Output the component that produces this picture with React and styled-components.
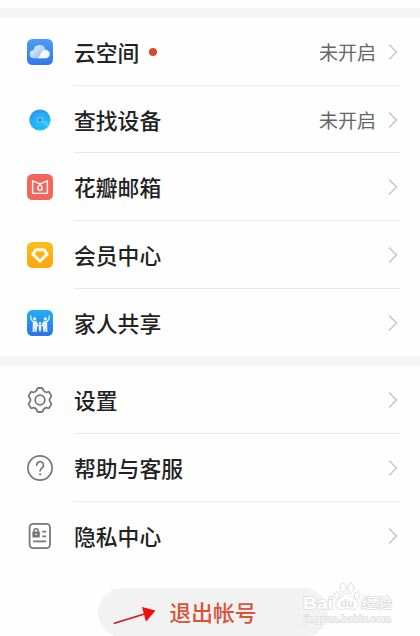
import React from "react";
import styled, { createGlobalStyle } from "styled-components";

const CloudIcon = () => (
  <svg width="26" height="26" viewBox="0 0 26 26">
    <defs>
      <linearGradient id="cloudBg" x1="0" y1="0" x2="0" y2="1">
        <stop offset="0" stopColor="#4a9df6" />
        <stop offset="1" stopColor="#3377ea" />
      </linearGradient>
      <linearGradient id="cloudShade" x1="0" y1="0" x2="1" y2="0.6">
        <stop offset="0" stopColor="#fff" stopOpacity="0.95" />
        <stop offset="1" stopColor="#fff" stopOpacity="0.35" />
      </linearGradient>
    </defs>
    <rect width="26" height="26" rx="5.5" fill="url(#cloudBg)" />
    <path
      d="M7 19.2a4 4 0 0 1-.5-8 6.3 6.3 0 0 1 12.3-.4 4.2 4.2 0 0 1 .2 8.4Z"
      fill="url(#cloudShade)"
    />
    <path
      d="M9 19.2c3.3 0 3.5-2.2 4.7-4.8 1.2-2.5 3-3.6 5.1-3.5a4.2 4.2 0 0 1 .2 8.3Z"
      fill="#fff"
      fillOpacity="0.9"
    />
  </svg>
);

const FindIcon = () => (
  <svg width="26" height="26" viewBox="0 0 26 26">
    <defs>
      <linearGradient id="findBg" x1="0" y1="0.1" x2="0.3" y2="1">
        <stop offset="0" stopColor="#3394ee" />
        <stop offset="1" stopColor="#12c3fa" />
      </linearGradient>
    </defs>
    <circle cx="13" cy="13" r="10.6" fill="url(#findBg)" />
    <circle cx="13" cy="13" r="7" fill="#35b4f7" fillOpacity="0.5" />
    <circle cx="13" cy="13" r="3.6" fill="#5cc6f9" fillOpacity="0.6" />
    <path d="M13 13 23.4 15.3A10.6 10.6 0 0 1 20 20.9Z" fill="#5ccdfc" fillOpacity="0.7" />
    <circle cx="13" cy="13" r="1.3" fill="#1776cc" />
  </svg>
);

const MailIcon = () => (
  <svg width="26" height="26" viewBox="0 0 26 26">
    <rect width="26" height="26" rx="5.5" fill="#f4665c" />
    <g fill="none" stroke="#fff" strokeWidth="1.4" strokeLinejoin="round">
      <path d="M13 9.8 5.6 6.9V19.4H20.4V6.9Z" />
      <path d="M13 10.2c-1.1 1.4-2.2 2.5-2.2 3.9a2.2 2.2 0 0 0 4.4 0c0-1.4-1.1-2.5-2.2-3.9Z" />
    </g>
  </svg>
);

const MemberIcon = () => (
  <svg width="26" height="26" viewBox="0 0 26 26">
    <defs>
      <linearGradient id="memberBg" x1="0" y1="0" x2="0" y2="1">
        <stop offset="0" stopColor="#fdbd1d" />
        <stop offset="1" stopColor="#fba70e" />
      </linearGradient>
    </defs>
    <rect width="26" height="26" rx="5.5" fill="url(#memberBg)" />
    <path
      d="M9.1 7.7h7.8l3.3 4.5-7.2 7-7.2-7Z"
      fill="none"
      stroke="#fffdf0"
      strokeWidth="3"
      strokeLinejoin="round"
    />
  </svg>
);

const FamilyIcon = () => (
  <svg width="26" height="26" viewBox="0 0 26 26">
    <defs>
      <linearGradient id="familyBg" x1="0" y1="0" x2="0" y2="1">
        <stop offset="0" stopColor="#22aef3" />
        <stop offset="1" stopColor="#2b72ed" />
      </linearGradient>
    </defs>
    <rect width="26" height="26" rx="5.5" fill="url(#familyBg)" />
    <g fill="#fff" fillOpacity="0.9">
      <circle cx="7.6" cy="8.9" r="1.7" />
      <circle cx="18.4" cy="8.9" r="1.7" />
      <circle cx="13" cy="13.2" r="1.2" />
      <path d="M5.9 11.3h3.6l.9 4.5-.9 6.2H8.1l-.4-4.3-.4 4.3H5.6Z" />
      <path d="M16.5 11.3h3.6l.3 10.7h-1.7l-.4-4.3-.4 4.3h-1.4l-.9-6.2Z" />
      <path d="M12 14.8h2l.3 3-.5 3.7h-1.6l-.5-3.7Z" />
    </g>
    <g fill="none" stroke="#fff" strokeWidth="1.1" strokeLinecap="round" strokeLinejoin="round">
      <path d="M6.3 12 4.2 9.5 3.7 5.8M19.7 12l2.1-2.5.5-3.7" />
      <path d="m9.2 12 1.6 3.5 2.2.2 2.2-.2 1.6-3.5" />
    </g>
  </svg>
);

const SettingsIcon = () => (
  <svg width="26" height="26" viewBox="-13 -13 26 26">
    <g fill="none" stroke="#777" strokeWidth="1.8" strokeLinejoin="round">
      <path d="M-1.6-12H1.6Q2.7-12 3-10.7L3.2-9.8Q4.8-7.7 6.9-7.7L7.8-8Q9-8.4 9.6-7.4L11.2-4.6Q11.7-3.7 10.8-2.8L10.1-2.1Q8.7 0 10.1 2.1L10.8 2.8Q11.7 3.7 11.2 4.6L9.6 7.4Q9 8.4 7.8 8L6.9 7.7Q4.8 7.7 3.2 9.8L3 10.7Q2.7 12 1.6 12H-1.6Q-2.7 12-3 10.7L-3.2 9.8Q-4.8 7.7-6.9 7.7L-7.8 8Q-9 8.4-9.6 7.4L-11.2 4.6Q-11.7 3.7-10.8 2.8L-10.1 2.1Q-8.7 0-10.1-2.1L-10.8-2.8Q-11.7-3.7-11.2-4.6L-9.6-7.4Q-9-8.4-7.8-8L-6.9-7.7Q-4.8-7.7-3.2-9.8L-3-10.7Q-2.7-12-1.6-12Z" />
      <circle r="4.8" />
    </g>
  </svg>
);

const HelpIcon = () => (
  <svg width="26" height="26" viewBox="0 0 26 26">
    <g fill="none" stroke="#777" strokeWidth="1.7" strokeLinecap="round">
      <circle cx="13" cy="13" r="12.1" />
      <path d="M9.7 10.2a3.4 3.4 0 1 1 5.6 2.5C13.9 13.8 13.1 14.4 13.1 15.8" />
    </g>
    <circle cx="13.1" cy="19.3" r="1.1" fill="#777" />
  </svg>
);

const PrivacyIcon = () => (
  <svg width="26" height="26" viewBox="0 0 26 26">
    <g fill="none" stroke="#777">
      <rect x="2.6" y="0.9" width="20.4" height="24.2" rx="3.5" strokeWidth="1.8" />
      <path d="M7 9.5V7.8a2.1 2.1 0 0 1 4.2 0v1.7" strokeWidth="1.5" />
      <path d="M15.3 8.7h3.7M15.3 13.3h3.7M6.2 18.3h13" strokeWidth="1.7" />
    </g>
    <rect x="5.4" y="8.5" width="7.4" height="6" rx="0.8" fill="#777" />
    <circle cx="9.1" cy="11.4" r="0.8" fill="#fff" />
  </svg>
);

const Chevron = () => (
  <svg width="10" height="18" viewBox="0 0 10 18">
    <path d="m1 1.5 7.5 7.5L1 16.5" fill="none" stroke="#c6c6c6" strokeWidth="1.5" />
  </svg>
);

const Arrow = () => (
  <svg width="44" height="20" viewBox="0 0 44 20">
    <path d="M2.5 17.3 34 7.5" stroke="#d0161b" strokeWidth="1.7" strokeLinecap="round" />
    <path d="M30 1 43.5 4.6 34 15.7Z" fill="#f20d0d" />
  </svg>
);

const services = [
  { title: "云空间", icon: CloudIcon, status: "未开启", dot: true },
  { title: "查找设备", icon: FindIcon, status: "未开启" },
  { title: "花瓣邮箱", icon: MailIcon },
  { title: "会员中心", icon: MemberIcon },
  { title: "家人共享", icon: FamilyIcon },
];

const options = [
  { title: "设置", icon: SettingsIcon },
  { title: "帮助与客服", icon: HelpIcon },
  { title: "隐私中心", icon: PrivacyIcon },
];

const Menu = ({ items }) => (
  <MenuList>
    {items.map(({ title, icon: Icon, status, dot }, i) => (
      <MenuRow key={title}>
        <Icon />
        <RowBody $divider={i < items.length - 1}>
          <Title>{title}</Title>
          {dot && <Dot />}
          <Status>{status}</Status>
          <Chevron />
        </RowBody>
      </MenuRow>
    ))}
  </MenuList>
);

const App = () => (
  <Page>
    <GlobalStyle />
    <Band />
    <Menu items={services} />
    <Band />
    <Menu items={options} />
    <Footer>
      <LogoutButton>
        退出帐号
        <Pointer>
          <Arrow />
        </Pointer>
      </LogoutButton>
    </Footer>
    <Watermark>
      <svg width="94" height="48" viewBox="0 0 94 48">
        <g fill="#fff" stroke="#dcdcdc" strokeWidth="0.9">
          <ellipse cx="36" cy="16.5" rx="2.8" ry="3.8" transform="rotate(-20 36 16.5)" />
          <ellipse cx="42.2" cy="8.8" rx="3" ry="4.4" />
          <ellipse cx="49.8" cy="8.8" rx="3" ry="4.4" transform="rotate(8 49.8 8.8)" />
          <ellipse cx="56.2" cy="16.5" rx="2.8" ry="3.8" transform="rotate(15 56.2 16.5)" />
          <path d="M46 14.5c4 0 5 3.7 7.7 5.6 3.5 2.6 4.5 5 3 8-2.5 4.3-7.2 1.7-10.7 1.7s-8 2.6-10.7-1.7c-1.5-3-.3-5.4 3-8 2.6-1.9 3.7-5.6 7.7-5.6Z" />
        </g>
        <Mark x="2" y="29.5" textLength="30" lengthAdjust="spacingAndGlyphs" $size={16}>
          Bai
        </Mark>
        <Mark x="39.5" y="27.5" textLength="13.5" $size={11} $faint>
          du
        </Mark>
        <Mark x="60" y="28.5" textLength="31" lengthAdjust="spacingAndGlyphs" $size={14} $thin>
          经验
        </Mark>
        <Mark x="3" y="42.5" textLength="87" lengthAdjust="spacingAndGlyphs" $size={9} $thin>
          jingyan.baidu.com
        </Mark>
      </svg>
    </Watermark>
  </Page>
);

const GlobalStyle = createGlobalStyle`
  body {
    margin: 0;
    background: #fefefe;
    font-family: "Noto Sans CJK SC", sans-serif;
  }
`;

const Page = styled.div`
  position: relative;
  width: 420px;
  height: 636px;
  padding-top: 8px;
  box-sizing: border-box;
  overflow: hidden;
`;

const Band = styled.div`
  height: 10px;
  background: #f5f5f5;
`;

const MenuList = styled.ul`
  margin: 0;
  padding: 0;
  list-style: none;
`;

const MenuRow = styled.li`
  display: flex;
  align-items: center;
  gap: 21px;
  height: 67.7px;
  padding: 0 20px 0 27px;
  svg {
    flex: none;
  }
`;

const RowBody = styled.div`
  flex: 1;
  display: flex;
  align-items: center;
  height: 100%;
  box-sizing: border-box;
  padding-right: 2px;
  box-shadow: ${(props) => (props.$divider ? "inset 0 -1px #e8e8e8" : "none")};
`;

const Title = styled.span`
  font-size: 21.8px;
  font-weight: 500;
  line-height: 32px;
  color: #222;
`;

const Dot = styled.span`
  width: 8px;
  height: 8px;
  margin-left: 10px;
  border-radius: 50%;
  background: #dc482d;
`;

const Status = styled.span`
  margin-left: auto;
  margin-right: 12px;
  font-size: 19px;
  line-height: 28px;
  color: #666;
`;

const Footer = styled.div`
  display: flex;
  padding: 18px 0 0 98px;
`;

const LogoutButton = styled.button`
  position: relative;
  width: 230px;
  height: 49px;
  padding: 0;
  border: 0;
  border-radius: 25px;
  background: #f2f2f2;
  font-family: inherit;
  font-size: 21.8px;
  font-weight: 500;
  line-height: 32px;
  color: #d9533a;
`;

const Pointer = styled.span`
  position: absolute;
  left: 14px;
  top: 18px;
  line-height: 0;
`;

const Watermark = styled.div`
  position: absolute;
  left: 301px;
  top: 579px;
  line-height: 0;
`;

const Mark = styled.text`
  font-family: "Liberation Sans", "Noto Sans CJK SC", sans-serif;
  font-size: ${(props) => props.$size}px;
  font-weight: ${(props) => (props.$thin ? 400 : 700)};
  fill: ${(props) => (props.$faint ? "#dedede" : "#fff")};
  stroke: #dcdcdc;
  stroke-width: ${(props) => (props.$faint ? 0 : 1.4)}px;
  paint-order: stroke;
`;

export default App;
